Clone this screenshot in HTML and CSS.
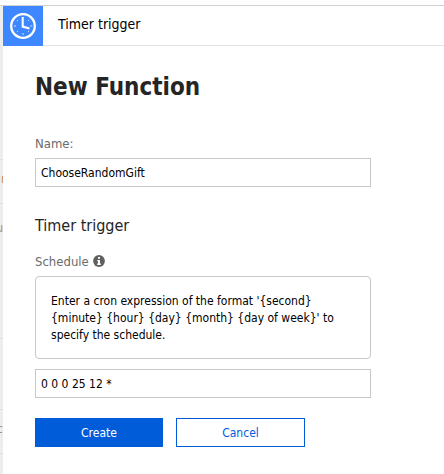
FILE: index.html
```html
<!DOCTYPE html>
<html lang="en">
<head>
<meta charset="utf-8">
<title>New Function</title>
<link rel="stylesheet" href="styles.css">
</head>
<body>
<div class="topbar"></div>
<div class="shell">
  <aside class="backdrop">
    <span class="row row-a"></span>
    <span class="clip clip-a">r</span>
    <span class="row row-b"></span>
    <span class="clip clip-b">u</span>
    <span class="row row-c"></span>
    <span class="row row-d"></span>
    <span class="clip clip-c">c</span>
    <span class="row row-e"></span>
  </aside>
  <main class="panel">
    <header class="header">
      <svg class="clock" viewBox="0 0 40 40" aria-hidden="true">
        <rect width="40" height="40" fill="#3d87ff"/>
        <circle cx="20" cy="20" r="11.8" fill="none" stroke="#fff" stroke-width="2.3"/>
        <path d="M19.700 11V20.600L26.500 22.600" fill="none" stroke="#fff" stroke-width="2.1"/>
        <g fill="#8bb7ff">
          <rect x="11" y="19" width="2" height="2"/><rect x="27.3" y="19" width="2" height="2"/><rect x="19" y="27" width="2" height="2"/>
        </g>
        <g fill="#c2daff">
          <rect x="14" y="14" width="1" height="1"/><rect x="25" y="14" width="1" height="1"/><rect x="14" y="25" width="1" height="1"/><rect x="25" y="25" width="1" height="1"/>
        </g>
      </svg>
      <span class="header-title">Timer trigger</span>
    </header>
    <form class="form">
      <h1 class="title">New Function</h1>
      <label class="label" for="name">Name:</label>
      <input class="field" id="name" value="ChooseRandomGift">
      <h2 class="subtitle">Timer trigger</h2>
      <label class="label" for="schedule">Schedule
        <svg class="info" viewBox="0 0 12 12" aria-hidden="true"><circle cx="6" cy="6" r="5.9" fill="#606060"/><path d="M5 2h2v1.7H5zM4.3 5H7v3.6h.8V10H4.2V8.600H5V6.200h-.7z" fill="#fff"/></svg>
      </label>
      <div class="help">Enter a cron expression of the format '{second}<br>{minute} {hour} {day} {month} {day of week}' to<br>specify the schedule.</div>
      <input class="field" id="schedule" value="0 0 0 25 12 *">
      <div class="actions">
        <button class="btn primary" type="button">Create</button>
        <button class="btn secondary" type="button">Cancel</button>
      </div>
    </form>
  </main>
</div>
</body>
</html>
```
FILE: styles.css
```css
* { box-sizing: border-box; }
body {
  margin: 0;
  height: 474px;
  overflow: hidden;
  background: #fff;
  color: #000;
  font-family: "DejaVu Sans Condensed", "DejaVu Sans", sans-serif;
  font-stretch: condensed;
  font-size: 12px;
}
.topbar { height: 6px; border-bottom: 1px solid #d2d2d2; }
.shell { display: flex; height: 468px; }
.backdrop {
  position: relative;
  width: 3px;
  overflow: hidden;
  background: #ededed;
}
.row { position: absolute; left: 0; width: 3px; height: 1px; background: #dedede; }
.row-a { top: 153px; }
.row-b { top: 197px; }
.row-c { top: 332px; }
.row-d { top: 403px; }
.row-e { top: 447px; }
.clip { position: absolute; line-height: 16px; }
.clip-a { top: 165px; left: 1px; color: #c98a58; }
.clip-b { top: 214px; right: 0; color: #a58f8f; }
.clip-c { top: 415px; right: 0; color: #b39070; }
.panel { flex: 1; }
.header {
  display: flex;
  height: 40px;
  border-bottom: 1px solid #e3e3e3;
}
.clock { width: 40px; height: 40px; flex: none; }
.header-title { margin-left: 15px; font-size: 14px; line-height: 36px; }
.form { width: 368px; padding-left: 32px; }
.title { margin: 23px 0 0; font-size: 24px; line-height: 36px; color: #252525; }
.label {
  display: flex;
  align-items: center;
  gap: 4px;
  height: 18px;
  font-size: 13px;
  color: #6b6b6b;
}
.title + .label { margin-top: 29px; }
.info { width: 12px; height: 12px; }
.field {
  display: block;
  width: 336px;
  height: 29px;
  margin: 6px 0 0;
  padding: 0 5px;
  border: 1px solid #c8c8c8;
  border-radius: 0;
  background: #fff;
  color: #000;
  font: inherit;
  outline: 0;
}
.subtitle { margin: 28px 0 0; font-size: 16px; font-weight: normal; line-height: 22px; color: #252525; }
.subtitle + .label { margin-top: 15px; }
.help {
  height: 83px;
  margin-top: 6px;
  padding: 16px 15px 14px;
  border: 1px solid #c8c8c8;
  border-radius: 4px;
  line-height: 17px;
  white-space: nowrap;
}
.help + .field { margin-top: 10px; }
.actions { display: flex; gap: 13px; margin-top: 20px; }
.btn {
  height: 29px;
  padding: 0;
  border: 1px solid #015cda;
  border-radius: 0;
  font: inherit;
}
.primary { width: 128px; background: #015cda; color: #fff; }
.secondary { width: 129px; background: #fff; color: #015cda; }
```
